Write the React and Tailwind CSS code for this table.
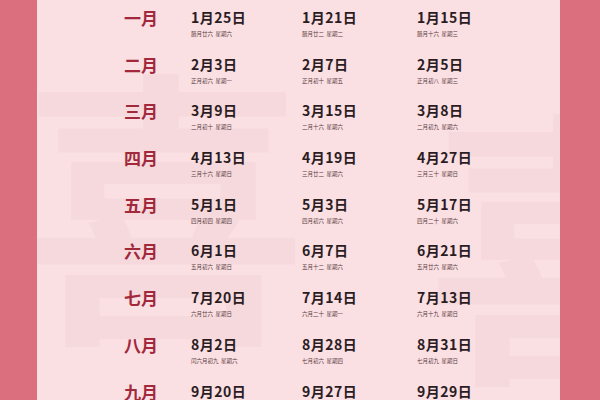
const rows = [
  { m: "一月", d: [["1月25日", "腊月廿六  星期六"], ["1月21日", "腊月廿二  星期二"], ["1月15日", "腊月十六  星期三"]] },
  { m: "二月", d: [["2月3日", "正月初六  星期一"], ["2月7日", "正月初十  星期五"], ["2月5日", "正月初八  星期三"]] },
  { m: "三月", d: [["3月9日", "二月初十  星期日"], ["3月15日", "二月十六  星期六"], ["3月8日", "二月初九  星期六"]] },
  { m: "四月", d: [["4月13日", "三月十六  星期日"], ["4月19日", "三月廿二  星期六"], ["4月27日", "三月三十  星期日"]] },
  { m: "五月", d: [["5月1日", "四月初四  星期四"], ["5月3日", "四月初六  星期六"], ["5月17日", "四月二十  星期六"]] },
  { m: "六月", d: [["6月1日", "五月初六  星期日"], ["6月7日", "五月十二  星期六"], ["6月21日", "五月廿六  星期六"]] },
  { m: "七月", d: [["7月20日", "六月廿六  星期日"], ["7月14日", "六月二十  星期一"], ["7月13日", "六月十九  星期日"]] },
  { m: "八月", d: [["8月2日", "闰六月初九  星期六"], ["8月28日", "七月初六  星期四"], ["8月31日", "七月初九  星期日"]] },
  { m: "九月", d: [["9月20日", "八月廿九  星期六"], ["9月27日", "八月初六  星期六"], ["9月29日", "八月初八  星期一"]] },
];

const colW = ["w-[111px]", "w-[115px]", "w-[120px]"];

export default function App() {
  return (
    <div
      className="flex w-[600px] h-[400px] overflow-hidden bg-[#dc6f7e]"
      style={{ fontFamily: '"Noto Sans CJK SC", "Noto Sans", sans-serif' }}
    >
      <div className="w-[37px] shrink-0 bg-[#dc6f7e]" />
      <div className="relative flex-1 bg-[#fadfe3] overflow-hidden">
        {/* faint background characters */}
        <div
          aria-hidden="true"
          className="absolute left-[-20px] top-[50px] text-[290px] leading-none font-bold text-[#f6d9dd] select-none"
        >
          喜
        </div>
        <div
          aria-hidden="true"
          className="absolute left-[390px] top-[90px] text-[290px] leading-none font-bold text-[#f6d9dd] select-none"
        >
          喜
        </div>
        <div className="relative pt-[7px]">
          {rows.map((r) => (
            <div key={r.m} className="flex h-[46.7px]">
              <div className="w-[121px] text-right text-[17px] leading-[21px] font-bold text-[#a2283b]">
                {r.m}
              </div>
              <div className="flex ml-[33px]">
                {r.d.map(([date, sub], i) => (
                  <div key={i} className={`${colW[i]} flex flex-col`}>
                    <div className="text-[14px] leading-[21px] font-semibold text-[#2b1c1f] tracking-[0.5px]">
                      {date}
                    </div>
                    <div className="text-[5.5px] leading-[8px] mt-[2px] text-[#5a3d42] whitespace-pre">
                      {sub}
                    </div>
                  </div>
                ))}
              </div>
            </div>
          ))}
        </div>
      </div>
      <div className="w-[40px] shrink-0 bg-[#dc6f7e]" />
    </div>
  );
}
